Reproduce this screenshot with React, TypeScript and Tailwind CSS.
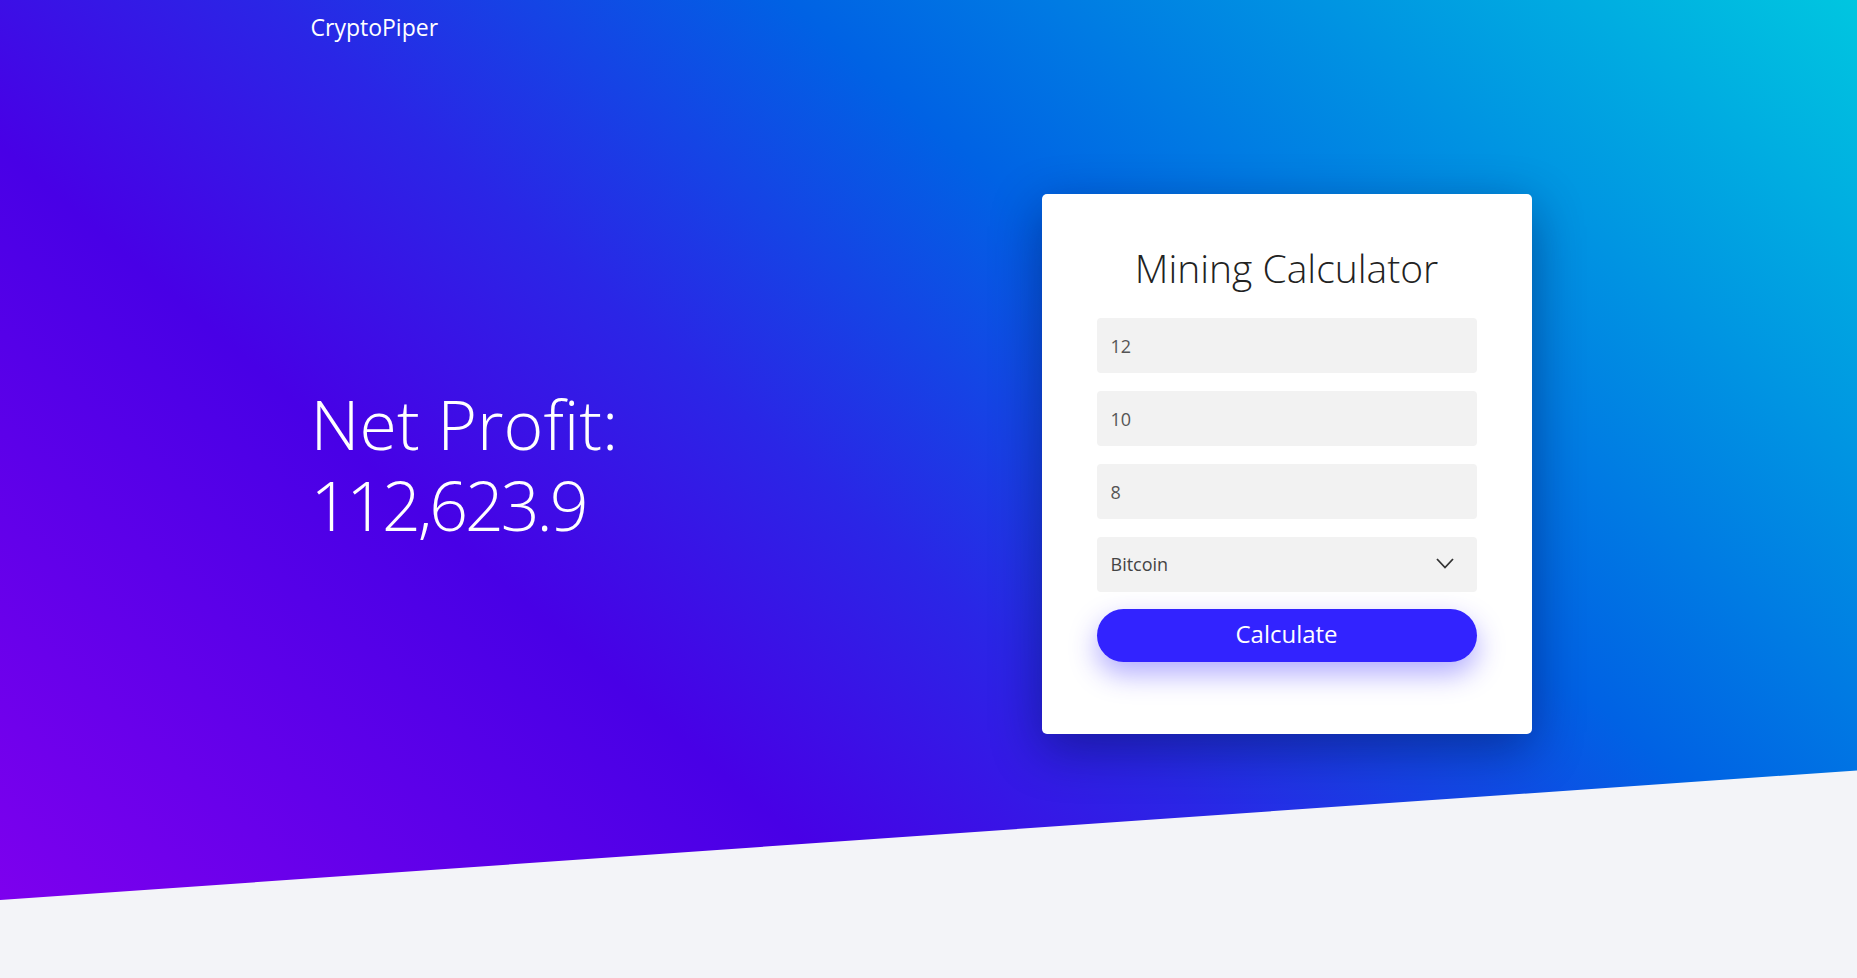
import { useState } from "react";

const coins = ["Bitcoin", "Ethereum", "Litecoin", "Monero"];

function Field({ value, onChange }: { value: string; onChange: (v: string) => void }) {
  return (
    <input
      type="text"
      value={value}
      onChange={(e) => onChange(e.target.value)}
      className="w-full h-[55px] rounded-[4px] bg-[#f2f2f2] px-[14px] text-[18px] text-[#555] outline-none"
    />
  );
}

export default function App() {
  const [hashrate, setHashrate] = useState("12");
  const [power, setPower] = useState("10");
  const [cost, setCost] = useState("8");
  const [coin, setCoin] = useState("Bitcoin");

  return (
    <div className="min-h-[1163px] bg-[#f3f4f8] font-['Open_Sans',sans-serif]">
      {/* Hero */}
      <section className="h-[900px] pr-[15px] bg-[linear-gradient(41deg,#7d00ee_0%,#4800e6_30%,#2a26e6_45%,#0062e4_63%,#00c6e0_100%)] [clip-path:polygon(0_0,100%_0,100%_85.6%,0_100%)]">
        <div className="mx-auto w-[1221px]">
          <header className="h-[56px] pt-[10px]">
            <span className="text-[23px] text-white">CryptoPiper</span>
          </header>

          <div className="mt-[138px] flex items-center justify-between">
            <h1 className="text-white font-light text-[68px] leading-[81px]">
              Net Profit:
              <br />
              <span className="tracking-[-0.045em]">112,623.9</span>
            </h1>

            <div className="w-[490px] rounded-[5px] bg-white px-[55px] pt-[48px] pb-[72px] shadow-[0_15px_50px_rgba(5,10,70,0.45)]">
              <h2 className="text-center text-[39px] font-light leading-[52px] text-[#222]">
                Mining Calculator
              </h2>
              <div className="mt-[24px] flex flex-col gap-[18px]">
                <Field value={hashrate} onChange={setHashrate} />
                <Field value={power} onChange={setPower} />
                <Field value={cost} onChange={setCost} />
                <div className="relative">
                  <select
                    value={coin}
                    onChange={(e) => setCoin(e.target.value)}
                    className="w-full h-[55px] appearance-none rounded-[4px] bg-[#f2f2f2] px-[14px] text-[18px] text-[#444] outline-none"
                  >
                    {coins.map((c) => (
                      <option key={c}>{c}</option>
                    ))}
                  </select>
                  <svg
                    className="pointer-events-none absolute right-[23px] top-[21px]"
                    width="18"
                    height="11"
                    viewBox="0 0 18 11"
                    fill="none"
                  >
                    <path d="M1 1l8 8.5L17 1" stroke="#333" strokeWidth="1.8" />
                  </svg>
                </div>
                <button className="h-[53px] w-full rounded-full bg-[#3223ff] pb-[3px] text-[24px] text-white shadow-[0_12px_28px_rgba(60,45,255,0.4)] -mt-[1px]">
                  Calculate
                </button>
              </div>
            </div>
          </div>
        </div>
      </section>
    </div>
  );
}
